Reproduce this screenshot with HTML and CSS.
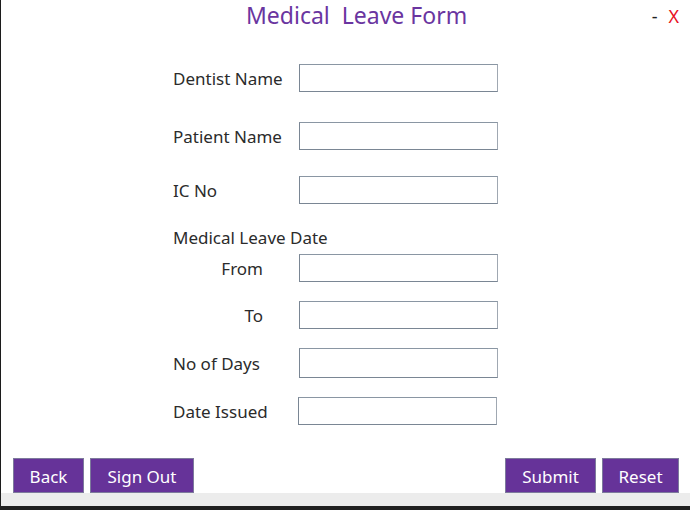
FILE: index.html
```html
<!DOCTYPE html>
<html>
<head>
<meta charset="utf-8">
<link rel="stylesheet" href="styles.css">
</head>
<body>
<div class="window">
  <header class="header">
    <h1 class="title">Medical&nbsp; Leave Form</h1>
    <div class="controls"><span class="min">-</span><span class="close">X</span></div>
  </header>
  <form class="form">
    <div class="row r1"><label class="lbl">Dentist Name</label><input class="field" type="text"></div>
    <div class="row r2"><label class="lbl">Patient Name</label><input class="field" type="text"></div>
    <div class="row r3"><label class="lbl">IC No</label><input class="field" type="text"></div>
    <div class="section">Medical Leave Date</div>
    <div class="row r5"><label class="lbl sub">From</label><input class="field" type="text"></div>
    <div class="row r6"><label class="lbl sub">To</label><input class="field" type="text"></div>
    <div class="row r7"><label class="lbl">No of Days</label><input class="field tall" type="text"></div>
    <div class="row r8"><label class="lbl shift">Date Issued</label><input class="field" type="text"></div>
  </form>
  <div class="actions">
    <div class="group"><button class="btn b-back">Back</button><button class="btn b-sign">Sign Out</button></div>
    <div class="group"><button class="btn b-submit">Submit</button><button class="btn b-reset">Reset</button></div>
  </div>
</div>
<div class="statusbar"></div>
<div class="taskbar"></div>
</body>
</html>
```
FILE: styles.css
```css
html, body {
  margin: 0;
  padding: 0;
  background: #202020;
  font-family: "Noto Sans", "Open Sans", sans-serif;
}
.window {
  height: 493px;
  background: #ffffff;
  border-left: 1px solid #1c1c1c;
  box-sizing: border-box;
  display: flex;
  flex-direction: column;
  position: relative;
}
.header {
  height: 40px;
  position: relative;
}
.title {
  margin: 0;
  padding-top: 0;
  padding-left: 245px;
  font-weight: normal;
  font-size: 23px;
  line-height: 30px;
  color: #6a35a0;
}
.controls {
  position: absolute;
  right: 11px;
  top: 4px;
  font-size: 18px;
  line-height: 24px;
  display: flex;
  gap: 11px;
}
.min { color: #222; }
.close { color: #e81123; }
.form {
  padding-left: 172px;
  display: flex;
  flex-direction: column;
  flex: 1;
}
.row {
  display: flex;
  align-items: center;
  height: 28px;
}
.r1 { margin-top: 24px; }
.r2 { margin-top: 30px; }
.r3 { margin-top: 26px; }
.r5 { margin-top: 4px; }
.r6 { margin-top: 19px; }
.r7 { margin-top: 19px; height: 30px; }
.r8 { margin-top: 19px; }
.lbl {
  width: 126px;
  font-size: 17px;
  color: #2b2b2b;
  padding-top: 1px;
}
.lbl.sub {
  width: 90px;
  margin-right: 36px;
  text-align: right;
}
.lbl.shift { width: 125px; }
.section {
  margin-top: 22px;
  font-size: 17px;
  line-height: 24px;
  color: #2b2b2b;
}
.field {
  width: 199px;
  height: 28px;
  box-sizing: border-box;
  border: 1px solid #7a8694;
  border-top-color: #8a96a3;
  border-right-color: #a0a8b2;
  margin: 0;
  padding: 0 4px;
  background: #fff;
}
.field.tall { height: 30px; }
.actions {
  display: flex;
  justify-content: space-between;
  padding: 0 11px 0 12px;
  height: 35px;
}
.group {
  display: flex;
  gap: 6px;
}
.btn {
  height: 35px;
  background: #663399;
  color: #ffffff;
  border: 1px solid #7d7a9c;
  font-family: "Noto Sans", "Open Sans", sans-serif;
  font-size: 17px;
  padding: 2px 0 0 0;
  margin: 0;
}
.b-back { width: 71px; }
.b-sign { width: 104px; }
.b-submit { width: 91px; }
.b-reset { width: 77px; }
.statusbar {
  height: 13px;
  background: #ececec;
  margin-left: 1px;
}
.taskbar {
  height: 4px;
  background: #202020;
}
```
